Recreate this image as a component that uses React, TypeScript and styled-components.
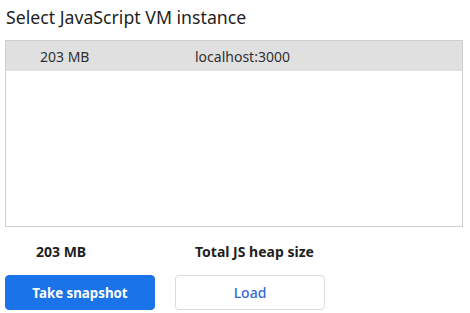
import styled, { createGlobalStyle } from "styled-components";

const GlobalStyle = createGlobalStyle`
  body {
    margin: 0;
    background: #ffffff;
    font-family: "Noto Sans", "Open Sans", sans-serif;
    color: #202124;
  }
`;

const Page = styled.div`
  width: 470px;
  height: 313px;
  padding: 5px 7px 0 5px;
  box-sizing: border-box;
  display: flex;
  flex-direction: column;
`;

const Title = styled.h2`
  margin: 0 0 0 1px;
  height: 35px;
  font-size: 17.7px;
  font-weight: 400;
  line-height: 24px;
  color: #1f1f1f;
`;

const List = styled.div`
  height: 187px;
  border: 1px solid #cfcfcf;
  box-sizing: border-box;
  display: flex;
  flex-direction: column;
`;

const Row = styled.div<{ $selected?: boolean }>`
  height: 30px;
  display: grid;
  grid-template-columns: 155px 1fr;
  align-items: center;
  padding-left: 34px;
  font-size: 14px;
  color: #303030;
  background: ${(p) => (p.$selected ? "#e0e0e0" : "transparent")};
`;

const Summary = styled.div`
  display: grid;
  grid-template-columns: 159px 1fr;
  align-items: center;
  height: 48px;
  padding-left: 31px;
  font-size: 14px;
  font-weight: 700;
  color: #1f1f1f;
`;

const Actions = styled.div`
  display: flex;
  gap: 20px;
`;

const Button = styled.button<{ $primary?: boolean }>`
  width: 150px;
  height: 35px;
  border-radius: 4px;
  font-family: "Noto Sans", "Open Sans", sans-serif;
  font-size: ${(p) => (p.$primary ? "13.3px" : "14px")};
  font-weight: ${(p) => (p.$primary ? 700 : 500)};
  cursor: pointer;
  border: 1px solid ${(p) => (p.$primary ? "#1a73e8" : "#dadce0")};
  background: ${(p) => (p.$primary ? "#1a73e8" : "#ffffff")};
  color: ${(p) => (p.$primary ? "#ffffff" : "#3367d6")};
`;

export default function App() {
  return (
    <>
      <GlobalStyle />
      <Page>
        <Title>Select JavaScript VM instance</Title>
        <List>
          <Row $selected>
            <span>203 MB</span>
            <span>localhost:3000</span>
          </Row>
        </List>
        <Summary>
          <span>203 MB</span>
          <span>Total JS heap size</span>
        </Summary>
        <Actions>
          <Button $primary>Take snapshot</Button>
          <Button>Load</Button>
        </Actions>
      </Page>
    </>
  );
}
